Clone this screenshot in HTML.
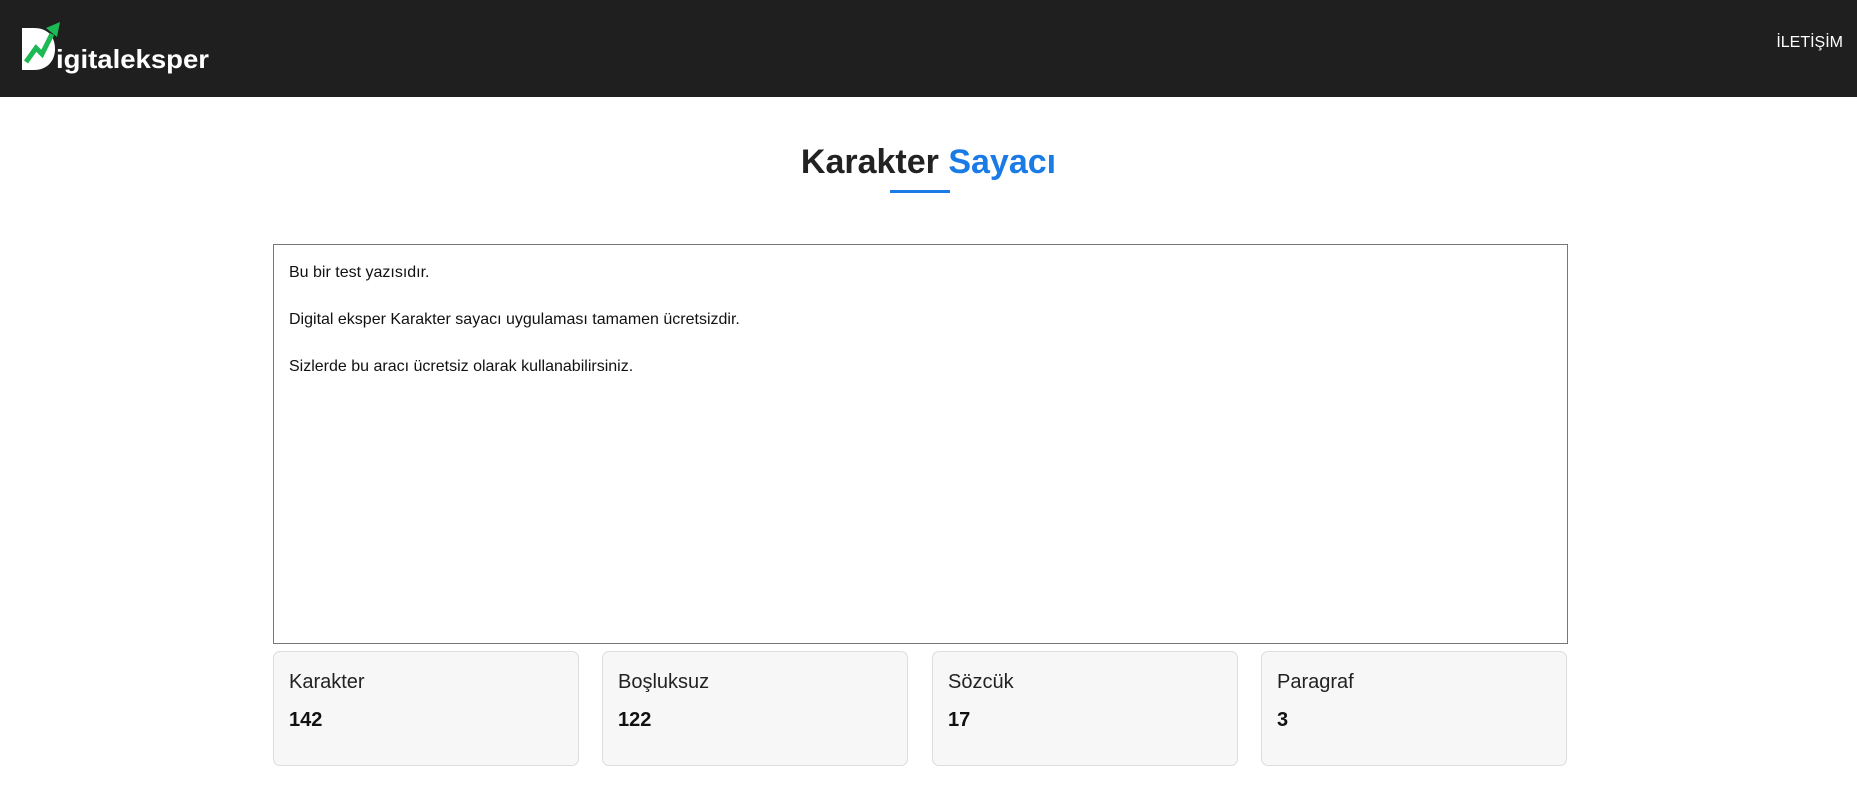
<!DOCTYPE html>
<html><head><meta charset="utf-8"><style>
*{box-sizing:border-box;margin:0;padding:0}
body{width:1857px;height:807px;background:#fff;font-family:"Liberation Sans",Arial,sans-serif;position:relative;overflow:hidden}
.hdr{position:absolute;left:0;top:0;width:1857px;height:97px;background:#1f1f1f}
.logo{position:absolute;left:20px;top:18px}
.nav{position:absolute;right:14px;top:34px;color:#fff;font-size:16px}
h1{position:absolute;left:0;width:1857px;top:143px;text-align:center;font-size:34px;font-weight:bold;color:#222}
h1 span{color:#1a7ae6}
.ul{position:absolute;left:890px;top:190px;width:60px;height:3px;background:#1a7ae6}
.ta{position:absolute;left:273px;top:244px;width:1295px;height:400px;border:1px solid #777;padding:16px 15px;font-size:16px;color:#111;line-height:23.5px}
.card{position:absolute;top:651px;height:115px;width:306px;background:#f7f7f7;border:1px solid #ddd;border-radius:7px;padding:19px 15px}
.card .l{font-size:20px;color:#222}
.card .n{font-size:20px;font-weight:bold;color:#111;margin-top:15px}
</style></head><body>
<div class="hdr">
<svg class="logo" width="192" height="60" viewBox="0 0 192 60">
<path d="M2 10 h12 c14 0 21 9 21 21 c0 12 -8 21 -21 21 h-12 z" fill="#fff"/>
<path d="M6 44 L16 30 L22 36 L32 16" stroke="#1db954" stroke-width="5" fill="none"/>
<path d="M26 10 L40 4 L37 19 z" fill="#1db954"/>
<text x="36" y="50" fill="#fff" font-family="Liberation Sans,sans-serif" font-weight="bold" font-size="26" textLength="153" lengthAdjust="spacingAndGlyphs">igitaleksper</text>
</svg>
<div class="nav">İLETİŞİM</div>
</div>
<h1>Karakter <span>Sayacı</span></h1>
<div class="ul"></div>
<div class="ta">Bu bir test yazısıdır.<br><br>Digital eksper Karakter sayacı uygulaması tamamen ücretsizdir.<br><br>Sizlerde bu aracı ücretsiz olarak kullanabilirsiniz.</div>
<div class="card" style="left:273px"><div class="l">Karakter</div><div class="n">142</div></div>
<div class="card" style="left:602px"><div class="l">Boşluksuz</div><div class="n">122</div></div>
<div class="card" style="left:932px"><div class="l">Sözcük</div><div class="n">17</div></div>
<div class="card" style="left:1261px"><div class="l">Paragraf</div><div class="n">3</div></div>
</body></html>
